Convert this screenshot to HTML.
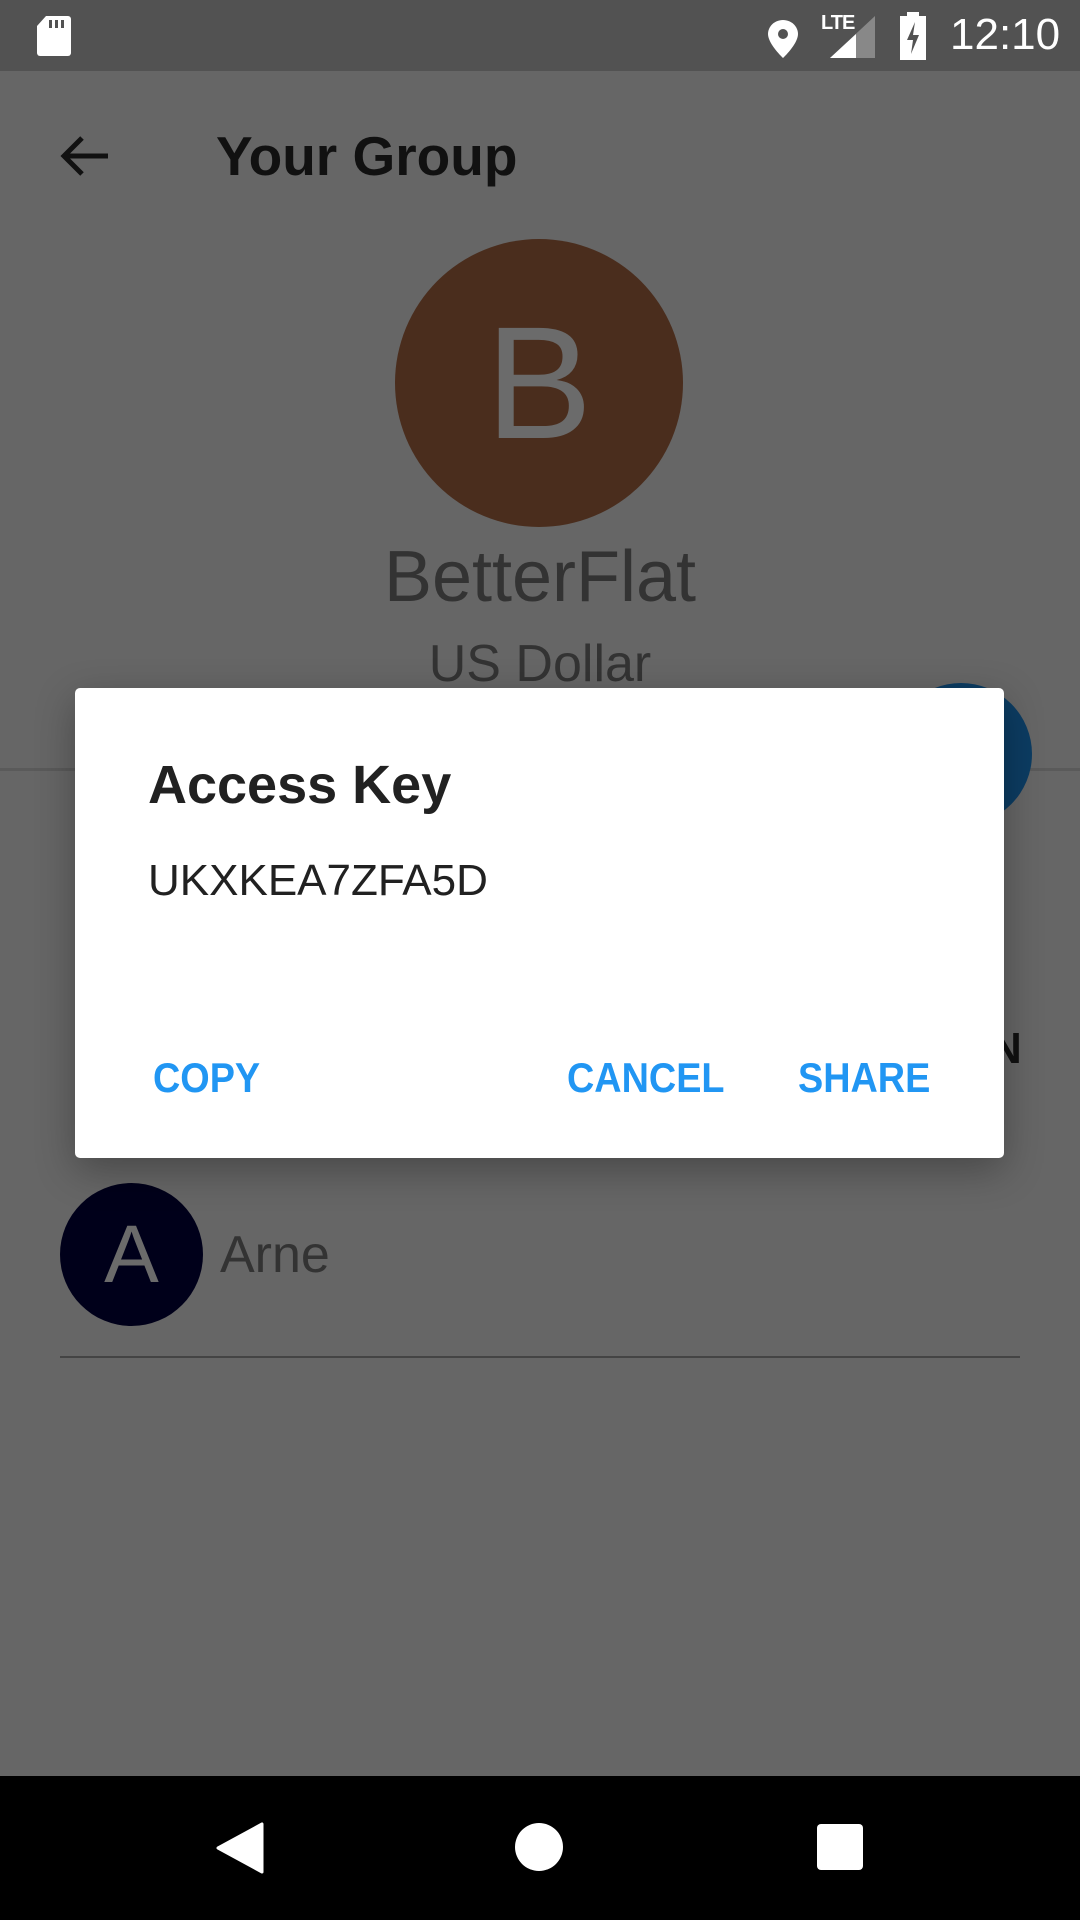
<!DOCTYPE html>
<html><head><meta charset="utf-8"><style>
*{margin:0;padding:0;box-sizing:border-box}
body{width:1080px;height:1920px;background:#666;position:relative;overflow:hidden;font-family:"Liberation Sans",sans-serif}
.a{position:absolute}
.btn{font-size:42px;font-weight:bold;color:#2196f3;transform:scaleX(.9);transform-origin:left top;white-space:nowrap}
</style></head><body>
<div class="a" style="left:0;top:0;width:1080px;height:71px;background:#525252"></div>
<svg class="a" style="left:34px;top:14px" width="40" height="44" viewBox="0 0 40 44"><path d="M12 2h22a3 3 0 0 1 3 3v34a3 3 0 0 1-3 3H6a3 3 0 0 1-3-3V12z" fill="#fff"/><rect x="15" y="6" width="3" height="8" fill="#525252"/><rect x="21" y="6" width="3" height="8" fill="#525252"/><rect x="27" y="6" width="3" height="8" fill="#525252"/></svg>
<svg class="a" style="left:765px;top:18px" width="36" height="42" viewBox="0 0 36 42"><path d="M18 2C9 2 3 9 3 16c0 10 15 24 15 24s15-14 15-24C33 9 27 2 18 2z" fill="#fff"/><circle cx="18" cy="16" r="5" fill="#525252"/></svg>
<div class="a" style="left:821px;top:12px;color:#fff;font-size:20px;font-weight:bold;letter-spacing:-1px">LTE</div>
<svg class="a" style="left:830px;top:16px" width="45" height="42"><polygon points="45,0 45,42 0,42" fill="#888"/><polygon points="26,18 26,42 0,42" fill="#fff"/></svg>
<svg class="a" style="left:898px;top:12px" width="30" height="48" viewBox="0 0 30 48"><rect x="9" y="0" width="12" height="5" fill="#fff"/><rect x="2" y="4" width="26" height="44" fill="#fff"/><path d="M17 10l-8 18h6l-2 14 8-19h-6z" fill="#525252"/></svg>
<div class="a" style="left:950px;top:10px;color:#fff;font-size:44px">12:10</div>

<svg class="a" style="left:58px;top:132px" width="52" height="48" viewBox="0 0 52 48"><path d="M50 24H6M24 6L6 24l18 18" stroke="#111" stroke-width="5" fill="none"/></svg>
<div class="a" style="left:216px;top:124px;font-size:55px;font-weight:bold;color:#111">Your Group</div>

<div class="a" style="left:395px;top:239px;width:288px;height:288px;border-radius:50%;background:#4a2d1d;color:#6b6b6b;font-size:160px;text-align:center;line-height:288px">B</div>
<div class="a" style="left:0;width:1080px;top:536px;text-align:center;font-size:72px;color:#333">BetterFlat</div>
<div class="a" style="left:0;width:1080px;top:634px;text-align:center;font-size:52px;color:#333">US Dollar</div>
<div class="a" style="left:0;top:768px;width:1080px;height:3px;background:#5a5a5a"></div>
<div class="a" style="left:890px;top:683px;width:142px;height:142px;border-radius:50%;background:#0c3c62"></div>
<div class="a" style="left:990px;top:1024px;font-size:44px;font-weight:bold;color:#111">N</div>

<div class="a" style="left:60px;top:1183px;width:143px;height:143px;border-radius:50%;background:#00001a;color:#6b6b6b;font-size:82px;text-align:center;line-height:143px">A</div>
<div class="a" style="left:220px;top:1225px;font-size:52px;color:#333">Arne</div>
<div class="a" style="left:60px;top:1356px;width:960px;height:2px;background:#444"></div>

<div class="a" style="left:75px;top:688px;width:929px;height:470px;background:#fff;border-radius:5px;box-shadow:0 12px 40px rgba(0,0,0,.3)">
<div class="a" style="left:73px;top:66px;font-size:54px;font-weight:bold;color:#212121">Access Key</div>
<div class="a" style="left:73px;top:168px;font-size:44px;color:#212121">UKXKEA7ZFA5D</div>
<div class="a btn" style="left:78px;top:366px">COPY</div>
<div class="a btn" style="left:492px;top:366px">CANCEL</div>
<div class="a btn" style="left:723px;top:366px">SHARE</div>
</div>

<div class="a" style="left:0;top:1776px;width:1080px;height:144px;background:#000"></div>
<svg class="a" style="left:216px;top:1822px" width="48" height="52"><polygon points="46,2 46,50 2,26" fill="#fff" stroke="#fff" stroke-width="3" stroke-linejoin="round"/></svg>
<div class="a" style="left:515px;top:1823px;width:48px;height:48px;border-radius:50%;background:#fff"></div>
<div class="a" style="left:817px;top:1824px;width:46px;height:46px;border-radius:4px;background:#fff"></div>
</body></html>
